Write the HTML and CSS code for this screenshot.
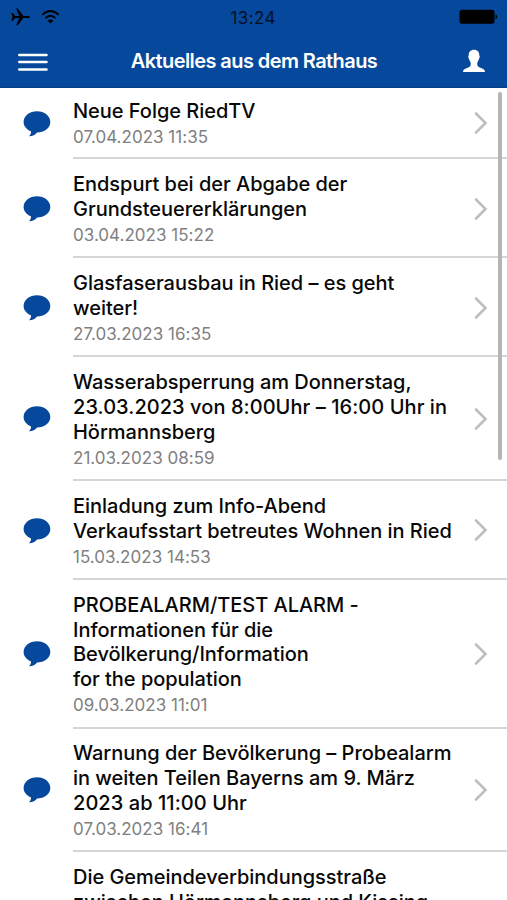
FILE: index.html
```html
<!DOCTYPE html>
<html lang="de">
<head>
<meta charset="utf-8">
<title>Aktuelles aus dem Rathaus</title>
<link rel="stylesheet" href="styles.css">
</head>
<body>
<svg class="defs" aria-hidden="true">
  <symbol id="bubble" viewBox="0 0 28 26"><path d="M14 .3C21.400 .3 27.300 5 27.300 11S21.400 21.500 14 21.500C12.700 23.600 9.600 25.200 6 25.200C7.200 24 8.100 22.500 8.100 20.400C3.600 18.700 .6 15.100 .6 11C.6 5 6.600 .3 14 .3Z" fill="#06489c"/></symbol>
  <symbol id="chevron" viewBox="0 0 14 24"><path d="M2 2.500L11.500 12L2 21.500" fill="none" stroke="#bebebe" stroke-width="2.600" stroke-linecap="round"/></symbol>
</svg>
<header class="header">
  <div class="status">
    <div class="signals">
      <svg class="plane" viewBox="0 0 20 18"><path d="M.3 5H1.800L4.300 7.900H8.300L5.200 .6H6.700L12.400 7.900H17.200C19.500 8 19.500 9.800 17.200 9.900H12.400L6.700 17.200H5.200L8.300 9.900H4.300L1.800 12.800H.3L1.500 8.900Z"/></svg>
      <svg class="wifi" viewBox="0 0 20 16"><g fill="none" stroke="#000" stroke-width="1.900"><path d="M1.300 5.800Q10 -2.300 18.700 5.800"/><path d="M4.800 9.200Q10 4.200 15.200 9.200"/></g><path d="M10 14.800L6.900 11.800Q10 9.300 13.100 11.800Z"/></svg>
    </div>
    <time class="clock">13:24</time>
    <svg class="battery" viewBox="0 0 39 16"><rect x=".5" y=".8" width="35" height="14" rx="2.500"/><path d="M36.500 5Q40 7.800 36.500 10.600Z"/></svg>
  </div>
  <nav class="bar">
    <svg class="menu" viewBox="0 0 30 20"><path d="M1.300 3H28.500M1.300 10H28.500M1.300 17.400H28.500" stroke="#fff" stroke-width="2.500" stroke-linecap="round"/></svg>
    <h1>Aktuelles aus dem Rathaus</h1>
    <svg class="user" viewBox="0 0 24 24"><path d="M12 .7C15.500 .7 17.400 3 17.300 6.300Q18.500 8 16.900 10.200C16.600 11.800 15.300 12.500 15.200 14.700C15.100 17.500 17 18.300 19.600 19.200C22 20 23 20.900 23 23H1C1 20.900 2 20 4.400 19.200C7 18.300 8.900 17.500 8.800 14.700C8.700 12.500 7.400 11.800 7.100 10.200Q5.500 8 6.700 6.300C6.600 3 8.500 .7 12 .7Z" fill="#fff"/></svg>
  </nav>
</header>
<main class="list">
  <article class="row"><svg class="bubble"><use href="#bubble"/></svg><div class="body"><div class="text"><h2>Neue Folge RiedTV</h2><time>07.04.2023 11:35</time></div><svg class="chevron"><use href="#chevron"/></svg></div></article>
  <article class="row"><svg class="bubble"><use href="#bubble"/></svg><div class="body"><div class="text"><h2>Endspurt bei der Abgabe der<br>Grundsteuererklärungen</h2><time>03.04.2023 15:22</time></div><svg class="chevron"><use href="#chevron"/></svg></div></article>
  <article class="row"><svg class="bubble"><use href="#bubble"/></svg><div class="body"><div class="text"><h2>Glasfaserausbau in Ried – es geht<br>weiter!</h2><time>27.03.2023 16:35</time></div><svg class="chevron"><use href="#chevron"/></svg></div></article>
  <article class="row"><svg class="bubble"><use href="#bubble"/></svg><div class="body"><div class="text"><h2>Wasserabsperrung am Donnerstag,<br><span class="figures">23.03.2023 von 8:00Uhr – 16:00 Uhr in</span><br>Hörmannsberg</h2><time>21.03.2023 08:59</time></div><svg class="chevron"><use href="#chevron"/></svg></div></article>
  <article class="row"><svg class="bubble"><use href="#bubble"/></svg><div class="body"><div class="text"><h2>Einladung zum Info-Abend<br>Verkaufsstart betreutes Wohnen in Ried</h2><time>15.03.2023 14:53</time></div><svg class="chevron"><use href="#chevron"/></svg></div></article>
  <article class="row"><svg class="bubble"><use href="#bubble"/></svg><div class="body"><div class="text"><h2>PROBEALARM/TEST ALARM -<br>Informationen für die<br>Bevölkerung/Information<br>for the population</h2><time>09.03.2023 11:01</time></div><svg class="chevron"><use href="#chevron"/></svg></div></article>
  <article class="row"><svg class="bubble"><use href="#bubble"/></svg><div class="body"><div class="text"><h2>Warnung der Bevölkerung – Probealarm<br>in weiten Teilen Bayerns am 9. März<br><span class="figures">2023 ab 11:00 Uhr</span></h2><time>07.03.2023 16:41</time></div><svg class="chevron"><use href="#chevron"/></svg></div></article>
  <article class="row last"><div class="body"><div class="text"><h2>Die Gemeindeverbindungsstraße<br>zwischen Hörmannsberg und Kissing</h2></div></div></article>
  <div class="scrollbar"></div>
</main>
</body>
</html>
```
FILE: styles.css
```css
* { box-sizing: border-box; }
body {
  margin: 0;
  height: 900px;
  overflow: hidden;
  display: flex;
  flex-direction: column;
  background: #fff;
  color: #080808;
  font-family: Inter, "Liberation Sans", sans-serif;
}
svg { display: block; flex: none; }
.defs { position: absolute; width: 0; height: 0; }
.header {
  flex: none;
  height: 87.500px;
  background: #06489c;
  border-bottom: 1px solid #053d85;
  position: relative;
  z-index: 1;
}
.status {
  display: grid;
  grid-template-columns: 1fr auto 1fr;
  align-items: center;
  height: 34px;
  padding: 0 9px 0 10.500px;
}
.signals { display: flex; gap: 10.500px; align-items: center; }
.plane { width: 20px; height: 18px; }
.wifi { width: 19px; height: 16px; }
.clock { font-size: 17px; letter-spacing: .4px; line-height: 20px; padding-top: 1px; margin-left: -2px; color: #051024; }
.battery { width: 39px; height: 16px; justify-self: end; }
.bar {
  display: grid;
  grid-template-columns: 40px 1fr 40px;
  align-items: center;
  height: 54px;
  padding: 0 21px 0 18px;
}
.menu { width: 30px; height: 20px; margin-top: 1px; }
.user { width: 24px; height: 24px; justify-self: end; }
h1 {
  margin: 0;
  padding-left: 4px;
  color: #fff;
  font-size: 20px;
  font-weight: 600;
  letter-spacing: -.58px;
  text-align: center;
  white-space: nowrap;
}
.list { flex: 1; min-height: 0; margin-top: -2.300px; overflow: hidden; position: relative; }
.row { display: flex; align-items: center; padding-left: 23px; }
.bubble { width: 28px; height: 26px; margin-right: 22px; }
.body {
  flex: 1;
  display: flex;
  align-items: center;
  justify-content: space-between;
  padding: 12.700px 19px 9.400px 0;
  border-bottom: 2px solid #d5d5d5;
}
.row:first-child .body { padding: 13.700px 19px 8.400px 0; }
.row:first-child .bubble { margin-top: 3px; }
.last { padding-left: 73px; }
.text { white-space: nowrap; }
h2 { margin: 0; font-size: 20px; font-weight: 500; line-height: 24.700px; letter-spacing: -.03px; }
.figures { letter-spacing: .06px; }
.text time { display: block; margin-top: 1.500px; font-size: 17px; line-height: 24px; color: #808080; letter-spacing: .02px; }
.chevron { width: 14px; height: 24px; margin-top: -2px; }
.scrollbar {
  position: absolute;
  top: 7px;
  right: 5px;
  width: 4px;
  height: 368px;
  border-radius: 2px;
  background: #b5b5b5;
}
```
